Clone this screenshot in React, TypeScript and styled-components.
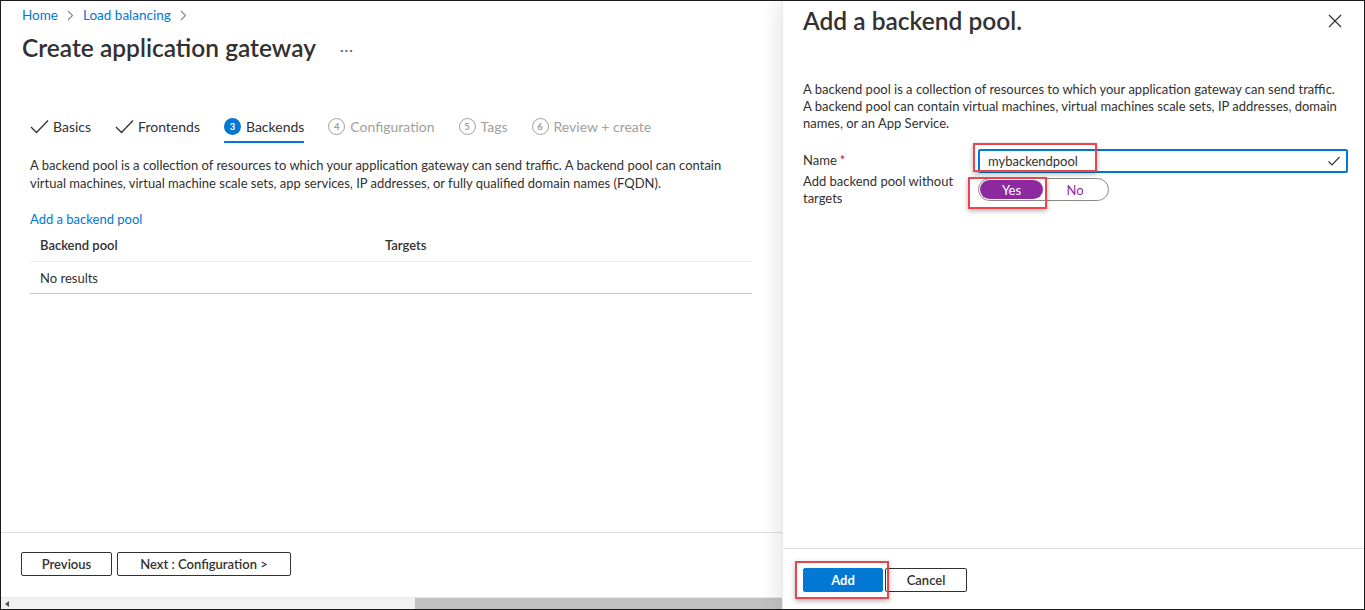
import React from "react";
import styled, { createGlobalStyle } from "styled-components";

const FONT = `Lato, "Liberation Sans", sans-serif`;

const Global = createGlobalStyle`
  html, body { margin: 0; padding: 0; background: #fff; }
  body { font-family: ${FONT}; color: #323130; }
  * { box-sizing: border-box; }
`;

const Frame = styled.div`
  width: 1365px;
  height: 610px;
  border: 1px solid #1b1b1b;
  display: flex;
  overflow: hidden;
  background: #fff;
`;

const LeftPane = styled.div`
  flex: 0 0 781px;
  display: flex;
  flex-direction: column;
`;

const Main = styled.div`
  flex: 1;
  padding: 5px 0 0 21px;
`;

const Breadcrumb = styled.nav`
  display: flex;
  align-items: center;
  gap: 9px;
  height: 18px;
  font-size: 13.5px;
  line-height: 18px;
`;

const Crumb = styled.a`
  color: #0078d4;
  text-decoration: none;
`;

const TitleRow = styled.div`
  display: flex;
  align-items: center;
  gap: 24px;
  margin-top: 8px;
  height: 32px;
`;

const Title = styled.h1`
  margin: 0;
  font-size: 24.5px;
  font-weight: 600;
  line-height: 32px;
  color: #323130;
`;

const More = styled.span`
  font-size: 14px;
  color: #605e5c;
  letter-spacing: 1px;
  padding-top: 2px;
`;

const Body = styled.div`
  padding-left: 8px;
  width: 730px;
`;

const Tabs = styled.div`
  display: flex;
  gap: 24px;
  margin-top: 51px;
  height: 28px;
`;

const Tab = styled.div<{ $active?: boolean; $disabled?: boolean }>`
  display: flex;
  align-items: center;
  gap: 4px;
  height: 28px;
  padding-bottom: 4px;
  font-size: 14px;
  color: ${(p) => (p.$disabled ? "#a19f9d" : "#323130")};
  border-bottom: 2px solid ${(p) => (p.$active ? "#0078d4" : "transparent")};
`;

const StepCircle = styled.span<{ $active?: boolean }>`
  width: 17px;
  height: 17px;
  border-radius: 50%;
  display: inline-flex;
  align-items: center;
  justify-content: center;
  font-size: 9.5px;
  font-weight: 700;
  background: ${(p) => (p.$active ? "#0078d4" : "transparent")};
  color: ${(p) => (p.$active ? "#fff" : "#a19f9d")};
  border: ${(p) => (p.$active ? "none" : "1px solid #a19f9d")};
  margin-right: 1px;
`;

const Paragraph = styled.p`
  margin: 13px 0 0;
  font-size: 13px;
  line-height: 18px;
  color: #323130;
`;

const Link = styled.a`
  display: block;
  margin-top: 18px;
  font-size: 13px;
  line-height: 18px;
  color: #0078d4;
  text-decoration: none;
`;

const Table = styled.div`
  width: 722px;
  font-size: 13px;
`;

const HeaderRow = styled.div`
  display: grid;
  grid-template-columns: 345px 1fr;
  height: 34px;
  align-items: center;
  padding: 0 0 0 10px;
  border-bottom: 1px solid #edebe9;
  font-weight: 600;
`;

const DataRow = styled.div`
  display: flex;
  height: 32px;
  align-items: center;
  padding-left: 10px;
  border-bottom: 1px solid #c8c6c4;
`;

const LeftFooter = styled.div`
  height: 65px;
  border-top: 1px solid #e1dfdd;
  padding: 19px 0 0 20px;
  display: flex;
  gap: 5px;
  align-items: flex-start;
`;

const Button = styled.button<{ $primary?: boolean; $w: number; $bold?: boolean }>`
  width: ${(p) => p.$w}px;
  height: 24px;
  font-family: ${FONT};
  font-size: 13px;
  font-weight: ${(p) => (p.$bold ? 700 : 600)};
  border-radius: 2px;
  cursor: pointer;
  border: 1px solid ${(p) => (p.$primary ? "#0078d4" : "#323130")};
  background: ${(p) => (p.$primary ? "#0078d4" : "#fff")};
  color: ${(p) => (p.$primary ? "#fff" : "#323130")};
  padding: 0;
`;

const Scrollbar = styled.div`
  height: 12px;
  display: flex;
  align-items: stretch;
  background: #f1f1f1;
  border-top: 1px solid #e8e8e8;
`;

const ScrollArrow = styled.span`
  width: 12px;
  display: flex;
  align-items: center;
  justify-content: center;
`;

const ScrollTrack = styled.div`
  flex: 1;
  display: flex;
`;

const ScrollThumb = styled.div`
  margin-left: 402px;
  flex: 1;
  background: #c1c1c1;
`;

const Panel = styled.aside`
  flex: 1;
  display: flex;
  flex-direction: column;
  background: #fff;
  border-left: 1px solid #eaeaea;
  box-shadow: -6px 0 18px rgba(0, 0, 0, 0.09);
  position: relative;
  z-index: 1;
`;

const PanelHeader = styled.div`
  display: flex;
  align-items: center;
  justify-content: space-between;
  padding: 3px 26px 0 20px;
  height: 36px;
`;

const PanelTitle = styled.h2`
  margin: 0;
  font-size: 24.5px;
  font-weight: 600;
  line-height: 32px;
  color: #323130;
`;

const CloseButton = styled.button`
  border: none;
  background: none;
  padding: 0;
  width: 14px;
  height: 14px;
  display: flex;
  cursor: pointer;
`;

const PanelBody = styled.div`
  flex: 1;
  padding: 44px 20px 0 20px;
`;

const PanelText = styled.p`
  margin: 0;
  font-size: 13px;
  line-height: 17px;
  color: #323130;
`;

const Form = styled.div`
  margin-top: 17px;
  display: grid;
  grid-template-columns: 175px 370px;
  align-items: start;
`;

const Label = styled.label<{ $pad?: number }>`
  font-size: 13px;
  line-height: 17px;
  color: #323130;
  padding-top: ${(p) => p.$pad ?? 0}px;
`;

const Required = styled.span`
  color: #a4262c;
  margin-left: 3px;
`;

const FieldWrap = styled.div`
  position: relative;
`;

const Input = styled.div`
  height: 24px;
  border: 2px solid #0078d4;
  border-radius: 2px;
  display: flex;
  align-items: center;
  justify-content: space-between;
  padding: 0 6px 0 8px;
  font-size: 13px;
  color: #323130;
`;

const Highlight = styled.span<{ $l: number; $t: number; $w: number; $h: number }>`
  position: absolute;
  left: ${(p) => p.$l}px;
  top: ${(p) => p.$t}px;
  width: ${(p) => p.$w}px;
  height: ${(p) => p.$h}px;
  border: 2px solid #e8464a;
  box-shadow: 0 2px 5px rgba(0, 0, 0, 0.3);
  pointer-events: none;
`;

const Toggle = styled.div`
  width: 131px;
  height: 23px;
  border: 1px solid #8a8886;
  border-radius: 12px;
  display: flex;
  align-items: center;
  padding: 1px;
  margin-top: 5px;
`;

const ToggleOption = styled.span<{ $on?: boolean }>`
  height: 19px;
  border-radius: 10px;
  display: flex;
  align-items: center;
  justify-content: center;
  font-size: 13px;
  background: ${(p) => (p.$on ? "#8d2a9f" : "transparent")};
  color: ${(p) => (p.$on ? "#fff" : "#8a2ba3")};
  flex: ${(p) => (p.$on ? "0 0 63px" : "1")};
`;

const PanelFooter = styled.div`
  height: 61px;
  border-top: 1px solid #e1dfdd;
  padding: 19px 0 0 20px;
  display: flex;
  gap: 2px;
  align-items: flex-start;
`;

const BtnWrap = styled.div`
  position: relative;
`;

const Check = () => (
  <svg width="19" height="15" viewBox="0 0 19 15">
    <path d="M1 8 L6.5 13.5 L18 1.5" fill="none" stroke="#323130" strokeWidth="1.3" />
  </svg>
);

const Chevron = () => (
  <svg width="7" height="11" viewBox="0 0 7 11">
    <path d="M1 1 L5.5 5.5 L1 10" fill="none" stroke="#8a8886" strokeWidth="1.1" />
  </svg>
);

const steps = [
  { n: 4, label: "Configuration" },
  { n: 5, label: "Tags" },
  { n: 6, label: "Review + create" },
];

export default function App() {
  return (
    <>
      <Global />
      <Frame>
        <LeftPane>
          <Main>
            <Breadcrumb>
              <Crumb>Home</Crumb>
              <Chevron />
              <Crumb>Load balancing</Crumb>
              <Chevron />
            </Breadcrumb>
            <TitleRow>
              <Title>Create application gateway</Title>
              <More>···</More>
            </TitleRow>
            <Body>
              <Tabs>
                <Tab>
                  <Check />
                  Basics
                </Tab>
                <Tab>
                  <Check />
                  Frontends
                </Tab>
                <Tab $active>
                  <StepCircle $active>3</StepCircle>
                  Backends
                </Tab>
                {steps.map((s) => (
                  <Tab key={s.n} $disabled>
                    <StepCircle>{s.n}</StepCircle>
                    {s.label}
                  </Tab>
                ))}
              </Tabs>
              <Paragraph>
                A backend pool is a collection of resources to which your application gateway can send traffic. A backend pool can contain
                <br />
                virtual machines, virtual machine scale sets, app services, IP addresses, or fully qualified domain names (FQDN).
              </Paragraph>
              <Link>Add a backend pool</Link>
              <Table>
                <HeaderRow>
                  <span>Backend pool</span>
                  <span>Targets</span>
                </HeaderRow>
                <DataRow>No results</DataRow>
              </Table>
            </Body>
          </Main>
          <LeftFooter>
            <Button $w={91}>Previous</Button>
            <Button $w={174}>Next : Configuration &gt;</Button>
          </LeftFooter>
          <Scrollbar>
            <ScrollArrow>
              <svg width="4" height="6" viewBox="0 0 4 6">
                <path d="M4 0 L0 3 L4 6 Z" fill="#505050" />
              </svg>
            </ScrollArrow>
            <ScrollTrack>
              <ScrollThumb />
            </ScrollTrack>
          </Scrollbar>
        </LeftPane>
        <Panel>
          <PanelHeader>
            <PanelTitle>Add a backend pool.</PanelTitle>
            <CloseButton aria-label="Close">
              <svg width="14" height="14" viewBox="0 0 14 14">
                <path d="M1 1 L13 13 M13 1 L1 13" stroke="#323130" strokeWidth="1.2" />
              </svg>
            </CloseButton>
          </PanelHeader>
          <PanelBody>
            <PanelText>
              A backend pool is a collection of resources to which your application gateway can send traffic.
              <br />
              A backend pool can contain virtual machines, virtual machines scale sets, IP addresses, domain
              <br />
              names, or an App Service.
            </PanelText>
            <Form>
              <Label $pad={3}>
                Name<Required>*</Required>
              </Label>
              <FieldWrap>
                <Input>
                  <span>mybackendpool</span>
                  <svg width="12" height="10" viewBox="0 0 12 10">
                    <path d="M0.5 5.5 L4 9 L11.5 1" fill="none" stroke="#323130" strokeWidth="1.1" />
                  </svg>
                </Input>
                <Highlight $l={-5} $t={-6} $w={124} $h={29} />
              </FieldWrap>
              <Label>
                Add backend pool without
                <br />
                targets
              </Label>
              <FieldWrap>
                <Toggle>
                  <ToggleOption $on>Yes</ToggleOption>
                  <ToggleOption>No</ToggleOption>
                </Toggle>
                <Highlight $l={-10} $t={4} $w={79} $h={32} />
              </FieldWrap>
            </Form>
          </PanelBody>
          <PanelFooter>
            <BtnWrap>
              <Button $primary $bold $w={80}>Add</Button>
              <Highlight $l={-8} $t={-7} $w={94} $h={38} />
            </BtnWrap>
            <Button $w={82}>Cancel</Button>
          </PanelFooter>
        </Panel>
      </Frame>
    </>
  );
}
